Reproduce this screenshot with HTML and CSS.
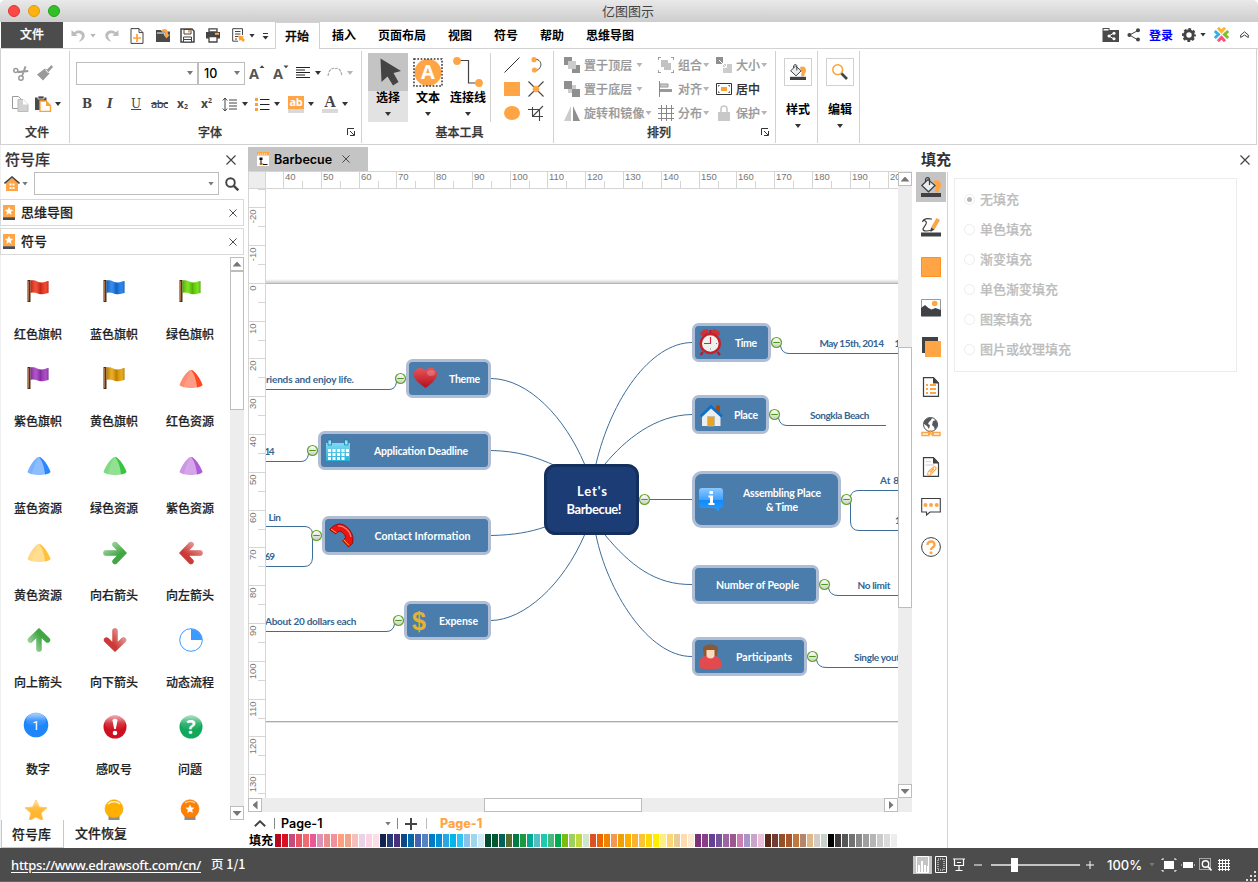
FILE: index.html
```html
<!DOCTYPE html>
<html lang="zh-CN">
<head>
<meta charset="utf-8">
<title>亿图图示</title>
<link rel="stylesheet" href="styles.css">
</head>
<body>
<svg class="defs" width="0" height="0">
  <defs>
    <linearGradient id="wave" x1="0" x2="1"><stop offset="0" stop-color="#000" stop-opacity=".25"/><stop offset=".3" stop-color="#fff" stop-opacity=".15"/><stop offset=".55" stop-color="#000" stop-opacity=".2"/><stop offset=".85" stop-color="#fff" stop-opacity=".1"/><stop offset="1" stop-color="#000" stop-opacity=".25"/></linearGradient>
    <linearGradient id="gloss" x1="0" y1="0" x2="0" y2="1"><stop offset="0" stop-color="#fff" stop-opacity=".65"/><stop offset=".55" stop-color="#fff" stop-opacity=".15"/><stop offset="1" stop-color="#fff" stop-opacity="0"/></linearGradient>
    <linearGradient id="glossx" x1="0" y1="0" x2=".7" y2="1"><stop offset=".1" stop-color="#fff" stop-opacity=".5"/><stop offset=".75" stop-color="#fff" stop-opacity="0"/></linearGradient>
    <linearGradient id="tg" x1="0" y1="0" x2="0" y2="1"><stop offset="0" stop-color="#fff"/><stop offset="1" stop-color="#c9cfc4"/></linearGradient>
    <linearGradient id="red" x1="0" y1="0" x2="0" y2="1"><stop offset="0" stop-color="#e8545b"/><stop offset="1" stop-color="#b3101b"/></linearGradient>
    <linearGradient id="cal" x1="0" y1="0" x2="0" y2="1"><stop offset="0" stop-color="#7ddcf2"/><stop offset="1" stop-color="#29b0da"/></linearGradient>
    <linearGradient id="info" x1="0" y1="0" x2="0" y2="1"><stop offset="0" stop-color="#8cc8ff"/><stop offset=".5" stop-color="#3fa2ff"/><stop offset=".52" stop-color="#1289fa"/><stop offset="1" stop-color="#2a9bff"/></linearGradient>
    <linearGradient id="gold" x1="0" y1="0" x2="0" y2="1"><stop offset="0" stop-color="#d9b24d"/><stop offset="1" stop-color="#f0b020"/></linearGradient>
    <symbol id="flag" viewBox="0 0 24 26"><path d="M1.5 2h3v22h-3z" fill="#4a2a15"/><path d="M2.6 3v20" stroke="#b07a50" stroke-width="1"/><path id="cloth" d="M4.500 2.600C9 .8 12 5 16 4.500c3-.3 4-1.500 6.500-1.500v12c-2.500 0-4 1.500-7 1.300C11 16 9 13.500 4.500 15z" fill="currentColor"/><path d="M4.500 2.600C9 .8 12 5 16 4.500c3-.3 4-1.500 6.500-1.500v12c-2.500 0-4 1.500-7 1.300C11 16 9 13.500 4.500 15z" fill="url(#wave)"/></symbol>
    <symbol id="cone" viewBox="0 0 24 20"><path d="M.5 16C3.500 8 9 1 12 1s8.500 7 11.500 15C22 18 17 19 12 19S2 18 .5 16z" fill="#fff"/><path d="M.5 16C3.500 8 9 1 12 1s8.500 7 11.500 15C22 18 17 19 12 19S2 18 .5 16z" fill="currentColor" opacity=".55"/><path d="M12 1c3 0 8.500 7 11.500 15-.8 1.300-3 2-5.500 2.500C17.500 12 15.500 5 12 1z" fill="currentColor"/><path d="M12 1C9 1 3.500 8 .5 16c.8 1 2.500 1.700 4.500 2.200C6 12 9 5 12 1z" fill="currentColor" opacity=".2"/></symbol>
    <symbol id="arr" viewBox="0 0 24 24"><path d="M3 12h16M12 3.500L20.300 12 12 20.500" fill="none" stroke="currentColor" stroke-width="5.400" stroke-linecap="round"/><path d="M3 12h16M12 3.500L20.300 12 12 20.500" fill="none" stroke="url(#glossx)" stroke-width="5.400" stroke-linecap="round"/></symbol>
    <symbol id="lib" viewBox="0 0 12 15"><path fill="#ffa545" d="M0 0h12v12H0z"/><path fill="#4c4c4c" d="M0 12.200h12V15H0z"/><path fill="#fff" d="M6 1.800l1.200 2.800 3 .3-2.300 2 .7 3L6 8.300 3.400 9.900l.7-3-2.300-2 3-.3z"/></symbol>
    <symbol id="x" viewBox="0 0 10 10"><path d="M.5.5l9 9M9.500.5l-9 9" stroke="#444" stroke-width="1.200" fill="none"/></symbol>
    <symbol id="launch" viewBox="0 0 8 8"><path d="M.5 7V.5H7M3 3l4 4M7.500 3v4.500H3" fill="none" stroke="#333"/></symbol>
    <symbol id="bucket" viewBox="0 0 20 20"><path d="M12 4c5-2 8 0 8 4 0 3-2 4-2 6 0 2-4 2-4 0 1-4 0-7-2-10z" fill="#ffa545"/><path d="M.8 8.500L7 2.500l7 6-6.500 6.300z" fill="#e9edf0" stroke="#3c3f42" stroke-width="1.200"/><path d="M4.500 5V2.500C5 0 9 0 8.500 3v5" fill="none" stroke="#3c3f42" stroke-width="1.200"/><path fill="#3f4144" d="M0 16h20v4H0z"/></symbol>
    <symbol id="minus" viewBox="0 0 12 12"><circle cx="6" cy="6" r="5" fill="url(#tg)" stroke="#63a527" stroke-width="1.200"/><path d="M2.800 6h6.400" stroke="#4b9a15" stroke-width="1.200"/></symbol>
  </defs>
</svg>
<header class="titlebar"><span class="light r"></span><span class="light y"></span><span class="light g"></span><h1>亿图图示</h1></header>

<nav class="menubar">
  <a class="filetab">文件</a>
  <div class="qat">
    <svg width="16" height="14" viewBox="0 0 16 14"><path d="M.5 1v6h6L4.700 5c3-2 7 0 6 3-.3 2-2 3-3 5 4-2 6-3 6-6.500C13.500 1.500 7 0 3 3.300z" fill="#bdbdbd"/></svg>
    <i class="caret pale"></i>
    <svg width="16" height="14" viewBox="0 0 16 14"><path d="M14.500 1v6h-6l1.800-2c-3-2-7 0-6 3 .3 2 2 3 3 5-4-2-6-3-6-6.500C1.500 1.500 8 0 12 3.300z" fill="#bdbdbd"/></svg>
    <svg width="14" height="16" viewBox="0 0 14 16"><path d="M1 .6h8l4 4v10.800H1zM9 .6v4h4" fill="#fff" stroke="#444"/><path d="M7 6v8M3 10h8" stroke="#ffa030" stroke-width="1.700"/></svg>
    <svg width="16" height="15" viewBox="0 0 16 15"><path d="M1 2h5l1 1.500h8V14H1z" fill="#4a4a4a"/><path d="M2 5h8v3" stroke="#fff" fill="none"/><path d="M7 1.500c4-1.500 6 0 6 5h2l-3.500 4L8.500 6.500h2C10.500 3 9 3 7 3z" fill="#ffa545"/></svg>
    <svg width="15" height="15" viewBox="0 0 15 15"><path d="M1 1h11l2 2v11H1z" fill="#fff" stroke="#444" stroke-width="1.500"/><path d="M4 1.500h7V6H4z" fill="#fff" stroke="#444"/><path d="M8 2h2v2.500H8z" fill="#ffa545"/><path d="M3.500 9h8v5h-8z" fill="#fff" stroke="#444"/><path d="M4 11.500h7" stroke="#444"/></svg>
    <svg width="16" height="15" viewBox="0 0 16 15"><path d="M4 .8h8V4H4z" fill="#fff" stroke="#444" stroke-width="1.300"/><path d="M1 4h14v6.500H1z" fill="#444"/><path d="M4 8.500h8V14H4z" fill="#fff" stroke="#444" stroke-width="1.300"/><path d="M10 4.800h4v2h-4z" fill="#ffa545"/></svg>
    <svg width="14" height="15" viewBox="0 0 14 15"><path d="M10.500 7V.7H.7v12.500H6M3 3.500h5.500M3 6h5.500M3 8.500h3M3 11h2" fill="none" stroke="#444"/><path d="M6 7.500l6 1-1.200 1.300L13 12l-2 2-2-2.200L7.500 13z" fill="#ffa030"/></svg>
    <i class="caret"></i>
    <svg width="7" height="8" viewBox="0 0 7 8"><path d="M1 1.500h5" stroke="#333"/><path d="M.5 4h6L3.500 7.500z" fill="#333"/></svg>
  </div>
  <div class="tabs"><a class="on">开始</a><a>插入</a><a>页面布局</a><a>视图</a><a>符号</a><a>帮助</a><a>思维导图</a></div>
  <div class="account">
    <svg width="17" height="14" viewBox="0 0 17 14"><path d="M.5 0h7v2H17v12H.5z" fill="#4a4a4a"/><path d="M1.500 1h5v1.500h-5z" fill="#fff"/><path d="M12 5L7 8l5 3" stroke="#fff" fill="none"/><circle cx="12" cy="5.200" r="1.500" fill="#fff"/><circle cx="12" cy="10.700" r="1.500" fill="#fff"/><circle cx="7" cy="8" r="1.500" fill="#fff"/></svg>
    <svg width="14" height="14" viewBox="0 0 14 14"><path d="M11 2.500L2.500 7l8.500 5" stroke="#444" fill="none"/><circle cx="11" cy="2.200" r="2" fill="#444"/><circle cx="2.400" cy="7" r="2" fill="#444"/><circle cx="11" cy="11.600" r="2" fill="#444"/></svg>
    <a class="login">登录</a>
    <svg width="14" height="14" viewBox="0 0 14 14"><circle cx="7" cy="7" r="4.200" fill="none" stroke="#444" stroke-width="3"/><circle cx="7" cy="7" r="6" fill="none" stroke="#444" stroke-width="2" stroke-dasharray="2.700 2.010" stroke-dashoffset="1.300"/></svg>
    <i class="caret"></i>
    <svg width="15" height="15" viewBox="0 0 15 15" fill="none" stroke-width="3"><path d="M4 .8l3.500 3.700L11 .8" stroke="#ffb42b"/><path d="M4 14.200l3.500-3.700 3.500 3.700" stroke="#ff4f7b"/><path d="M.8 4l3.700 3.500L.8 11" stroke="#35b0e6"/><path d="M14.200 4l-3.700 3.500 3.700 3.500" stroke="#7cc030"/></svg>
    <svg width="9" height="8" viewBox="0 0 9 8"><path d="M.7 4L4.500.8 8.300 4v2.500L4.500 4 .7 6.500z" fill="none" stroke="#444"/></svg>
  </div>
</nav>

<section class="ribbon">
  <div class="group g-file">
    <div class="row r-file">
      <svg width="16" height="15" viewBox="0 0 16 15"><g fill="none" stroke="#9a9a9a" stroke-width="1.500"><circle cx="2.800" cy="4.500" r="2"/><circle cx="8" cy="12" r="2.200"/></g><path d="M4.500 5L15 4l.5 2L5 7.300zM8 10.500L11.500.3l2 .2L9.800 10.500z" fill="#9a9a9a"/></svg>
      <svg width="16" height="16" viewBox="0 0 16 16"><path d="M14.500 0L16 2 11.500 7l1 1.500L6 15.500l-6-6L8 3.500l2 1z" fill="#9a9a9a"/><path d="M8.500 4.500l3 3.500" stroke="#fff"/></svg>
    </div>
    <div class="row r-file b">
      <svg width="17" height="16" viewBox="0 0 17 16"><path d="M.5.500h6l3 3v9h-9z" fill="#fff" stroke="#9a9a9a"/><path d="M6 3.500h5l5 5V15.500H6z" fill="#d2d2d2" stroke="#bbb"/><path d="M11 3.500v5h5" fill="#fff"/></svg>
      <svg width="17" height="16" viewBox="0 0 17 16"><path d="M0 1.500h11.500V6H5v8H0z" fill="#4a4a4a"/><path d="M3 0h6v3H3z" fill="#4a4a4a" stroke="#fff" stroke-width=".7"/><path d="M5 5h6l4.500 4.500v6H5z" fill="#fff" stroke="#ffa030" stroke-width="1.300"/><path d="M11 4.500L16 10h-5z" fill="#ffa030"/></svg>
      <i class="caret"></i>
    </div>
    <div class="label"><span>文件</span></div>
  </div>
  <div class="group g-font">
    <div class="row r-font1">
      <div class="combo"><i class="caret mid"></i></div>
      <div class="combo size"><span>10</span><i class="caret mid"></i></div>
      <svg width="17" height="22" viewBox="0 0 17 22"><path d="M10.500 6L13 3.300 15.500 6z" fill="#444"/><text x="0" y="17" class="icoA">A</text></svg>
      <svg width="17" height="22" viewBox="0 0 17 22"><path d="M10.500 3.500L13 6.200 15.500 3.500z" fill="#444"/><text x="0" y="17" class="icoA">A</text></svg>
      <svg width="14" height="12" viewBox="0 0 14 12"><path d="M0 .5h14M0 3h9M0 5.500h14M0 8h9M0 10.500h14" stroke="#222" stroke-width="1.100"/></svg>
      <i class="caret"></i>
      <svg width="16" height="12" viewBox="0 0 16 12"><path d="M1 9C2 2 6 0 8 2c2-2 6 0 7 7" fill="none" stroke="#aaa" stroke-width="1.200" stroke-dasharray="3 1"/></svg>
      <i class="caret pale"></i>
    </div>
    <div class="row r-font2">
      <b class="gl serif">B</b><b class="gl serif it">I</b><span class="gl serif un">U</span><span class="gl ab">abc</span><b class="gl">x<sub>2</sub></b><b class="gl">x<sup>2</sup></b>
      <svg width="16" height="15" viewBox="0 0 16 15"><path d="M3 1v13M.8 3.500L3 1l2.200 2.500M.8 11.500L3 14l2.200-2.500M7 3h8M7 6h8M7 9h8M7 12h8" stroke="#444" fill="none"/></svg>
      <i class="caret"></i>
      <svg width="15" height="13" viewBox="0 0 15 13"><path d="M0 0h3v3H0zM0 5h3v3H0zM0 10h3v3H0z" fill="#ffa030"/><path d="M5 1.500h9.500M5 6.500h9.500M5 11.500h9.500" stroke="#222" stroke-width="1.100"/></svg>
      <i class="caret"></i>
      <span class="hl"><em>ab</em></span>
      <i class="caret"></i>
      <span class="fc"><b>A</b></span>
      <i class="caret"></i>
    </div>
    <div class="label"><span>字体</span><svg width="8" height="8"><use href="#launch"/></svg></div>
  </div>
  <div class="group g-tools">
    <div class="tools">
      <button class="big on"><svg width="40" height="38" viewBox="0 0 40 38"><path d="M12.500 5.500L33 18l-7.500 2 5 9-5.500 3.500-5.500-9-6 5.500z" fill="#444"/></svg><span>选择</span><i class="caret"></i></button>
      <button class="big"><svg width="40" height="38" viewBox="0 0 40 38"><circle cx="20" cy="19.500" r="13.500" fill="#ffa545"/><path d="M6 6h28v27H6z" fill="none" stroke="#333" stroke-width="1.500" stroke-dasharray="1.700 1.600"/><text x="20" y="26" class="bigA">A</text></svg><span>文本</span><i class="caret"></i></button>
      <button class="big"><svg width="40" height="38" viewBox="0 0 40 38"><path d="M9 7.500h11.500v22.500H31" fill="none" stroke="#444" stroke-width="1.200"/><circle cx="9" cy="8" r="3.900" fill="#ffa545"/><circle cx="31" cy="30" r="3.900" fill="#ffa545"/></svg><span>连接线</span><i class="caret"></i></button>
      <div class="shapes">
        <svg width="16" height="16"><path d="M.5 15.500L15.500.500" stroke="#333"/></svg>
        <svg width="16" height="16" viewBox="0 0 16 16"><path d="M6 2c9 0 9 10 1 12" fill="none" stroke="#444"/><circle cx="6" cy="2.700" r="2.600" fill="#ffa545"/><circle cx="6.500" cy="13" r="2.600" fill="#ffa545"/></svg>
        <svg width="16" height="16"><path d="M0 1h16v14H0z" fill="#ffa545"/></svg>
        <svg width="16" height="16" viewBox="0 0 16 16"><path d="M.5.500l15 15M15.500.500l-15 15" stroke="#444" stroke-width="1.100"/><circle cx="8" cy="8" r="3.300" fill="#ffa545"/></svg>
        <svg width="16" height="16"><ellipse cx="8" cy="8" rx="8" ry="7" fill="#ffa545"/></svg>
        <svg width="16" height="16" viewBox="0 0 16 16"><path d="M0 4.500h11.500V16M4.500 2v9.500H15M4.500 11.500L15 1" stroke="#444" fill="none" stroke-width="1.100"/></svg>
      </div>
    </div>
    <div class="label"><span>基本工具</span></div>
  </div>
  <div class="group g-arr">
    <div class="arr">
      <span class="cmd"><svg width="16" height="16"><path d="M0 0h8v8H0zM8 8h8v8H8z" fill="#8f8f8f"/><path d="M4 4h8v8H4z" fill="#ccc"/></svg>置于顶层<i class="caret pale"></i></span>
      <span class="cmd"><svg width="16" height="16"><path d="M3 3h7v7H3zM6 6h7v7H6z" fill="#c2c2c2"/><path d="M0 3V0h3M13 0h3v3M16 13v3h-3M3 16H0v-3" fill="none" stroke="#888" stroke-width="1.500"/></svg>组合<i class="caret pale"></i></span>
      <span class="cmd"><svg width="16" height="16"><path d="M0 0h7v7H0z" fill="#8f8f8f"/><path d="M7 7h9v9H7z" fill="#ccc"/><path d="M3 3l7 7M7 10.500h3.500V7" stroke="#fff" fill="none"/></svg>大小<i class="caret pale"></i></span>
      <span class="cmd"><svg width="16" height="16"><path d="M4 4h8v8H4z" fill="#ccc"/><path d="M0 0h8v8H0zM8 8h8v8H8z" fill="#8f8f8f"/></svg>置于底层<i class="caret pale"></i></span>
      <span class="cmd"><svg width="16" height="16"><path d="M1.500 0v16" stroke="#888"/><path d="M2 3h8v3H2z" fill="#ccc" stroke="#999"/><path d="M2 8h12v3H2z" fill="#999"/></svg>对齐<i class="caret pale"></i></span>
      <span class="cmd dark"><svg width="16" height="12"><path d="M.5.500h15v11H.5z" fill="#fff" stroke="#333"/><path d="M5 4h6v4H5z" fill="#ffa030"/><path d="M2.500 3.500v-1h1M12.500 2.500h1v1M13.500 8.500v1h-1M3.500 9.500h-1v-1" stroke="#444" fill="none"/></svg>居中</span>
      <span class="cmd"><svg width="16" height="15"><path d="M7 0v15H0z" fill="#ccc"/><path d="M9 0v15h7z" fill="#8f8f8f"/></svg>旋转和镜像<i class="caret pale"></i></span>
      <span class="cmd"><svg width="16" height="16"><path d="M3.500 0v16M8.500 0v16M13.500 0v16M0 3.500h16M0 8.500h16M0 13.500h16" stroke="#888"/></svg>分布<i class="caret pale"></i></span>
      <span class="cmd"><svg width="14" height="16"><path d="M1 7h12v9H1z" fill="#c8c8c8"/><path d="M4 8V4c0-4 6-4 6 0v4" fill="none" stroke="#c8c8c8" stroke-width="1.600"/></svg>保护<i class="caret pale"></i></span>
    </div>
    <div class="label"><span>排列</span><svg width="8" height="8"><use href="#launch"/></svg></div>
  </div>
  <div class="group g-drop"><div class="box"><svg width="16" height="16"><use href="#bucket"/></svg></div><span>样式</span><i class="caret"></i></div>
  <div class="group g-drop"><div class="box"><svg width="16" height="16" viewBox="0 0 16 16"><circle cx="5.700" cy="5.700" r="4.900" fill="none" stroke="#ffa030" stroke-width="1.500"/><path d="M9.500 9.500l5.500 5.500" stroke="#444" stroke-width="2.600"/></svg></div><span>编辑</span><i class="caret"></i></div>
</section>

<main class="work">
  <aside class="left">
    <div class="phead"><h2>符号库</h2><svg width="10" height="10"><use href="#x"/></svg></div>
    <div class="search">
      <svg width="16" height="15" viewBox="0 0 16 15"><path d="M2 7l6-5 6 5v8H2z" fill="#ffa545"/><path d="M.5 7.500L8 1l7.500 6.500" fill="none" stroke="#444" stroke-width="1.600"/><path d="M5.500 7.500h2v2h-2zM8.500 7.500h2v2h-2zM5.500 11h2v2h-2zM8.500 11h2v2h-2z" fill="#fff"/></svg>
      <i class="caret mid"></i>
      <div class="field"><i class="caret mid"></i></div>
      <svg width="14" height="14" viewBox="0 0 14 14"><circle cx="5.500" cy="5.500" r="4.300" fill="none" stroke="#444" stroke-width="1.900"/><path d="M8.800 8.800l4.500 4.500" stroke="#444" stroke-width="2.400"/></svg>
    </div>
    <div class="libbar"><svg width="12" height="15"><use href="#lib"/></svg><span>思维导图</span><svg width="8" height="8"><use href="#x"/></svg></div>
    <div class="libbar"><svg width="12" height="15"><use href="#lib"/></svg><span>符号</span><svg width="8" height="8"><use href="#x"/></svg></div>
    <div class="libbody">
      <div class="symbols">
        <figure><svg class="c-red flag"><use href="#flag"/></svg><figcaption>红色旗帜</figcaption></figure>
        <figure><svg class="c-blue flag"><use href="#flag"/></svg><figcaption>蓝色旗帜</figcaption></figure>
        <figure><svg class="c-green flag"><use href="#flag"/></svg><figcaption>绿色旗帜</figcaption></figure>
        <figure><svg class="c-purple flag"><use href="#flag"/></svg><figcaption>紫色旗帜</figcaption></figure>
        <figure><svg class="c-gold flag"><use href="#flag"/></svg><figcaption>黄色旗帜</figcaption></figure>
        <figure><svg class="k-red cone"><use href="#cone"/></svg><figcaption>红色资源</figcaption></figure>
        <figure><svg class="k-blue cone"><use href="#cone"/></svg><figcaption>蓝色资源</figcaption></figure>
        <figure><svg class="k-green cone"><use href="#cone"/></svg><figcaption>绿色资源</figcaption></figure>
        <figure><svg class="k-purple cone"><use href="#cone"/></svg><figcaption>紫色资源</figcaption></figure>
        <figure><svg class="k-gold cone"><use href="#cone"/></svg><figcaption>黄色资源</figcaption></figure>
        <figure><svg class="a-green arw"><use href="#arr"/></svg><figcaption>向右箭头</figcaption></figure>
        <figure><svg class="a-red arw to-left"><use href="#arr"/></svg><figcaption>向左箭头</figcaption></figure>
        <figure><svg class="a-green arw to-top"><use href="#arr"/></svg><figcaption>向上箭头</figcaption></figure>
        <figure><svg class="a-red arw to-bottom"><use href="#arr"/></svg><figcaption>向下箭头</figcaption></figure>
        <figure><svg class="disc" width="24" height="24"><circle cx="12" cy="12" r="11.300" fill="#fff" stroke="#3d9bff"/><path d="M12 12V1a11 11 0 0 1 11 11z" fill="#3d9bff"/></svg><figcaption>动态流程</figcaption></figure>
        <figure><svg class="num" width="26" height="26"><circle cx="13" cy="13" r="12.300" fill="#1e86fb"/><ellipse cx="13" cy="8" rx="10" ry="7" fill="url(#gloss)"/><text x="13" y="17.500" class="n1">1</text></svg><figcaption>数字</figcaption></figure>
        <figure><svg class="disc" width="24" height="24"><circle cx="12" cy="12" r="11.500" fill="#cf1020"/><ellipse cx="12" cy="8" rx="10.500" ry="7.500" fill="url(#gloss)"/><path d="M9.500 5.500c0-2.500 5-2.500 5 0L12.800 14h-1.600z" fill="#fff"/><circle cx="12" cy="18" r="2.300" fill="#fff"/></svg><figcaption>感叹号</figcaption></figure>
        <figure><svg class="disc" width="24" height="24"><circle cx="12" cy="12" r="11.500" fill="#12a85c"/><ellipse cx="12" cy="8" rx="10.500" ry="7.500" fill="url(#gloss)"/><text x="12" y="19" class="q">?</text></svg><figcaption>问题</figcaption></figure>
        <figure class="last"><svg class="star" width="24" height="24"><path d="M12 1l3.300 7 7.700.8-5.800 5.200 1.800 8L12 18l-7 4 1.800-8L1 8.800 8.700 8z" fill="#ffb52e" stroke="#ffc860"/><path d="M12 1l3.300 7 7.700.8-5.800 5.200H7L1 8.800 8.700 8z" fill="url(#gloss)"/></svg></figure>
        <figure class="last"><svg width="20" height="24"><path d="M4.500 17h11v4h-11z" fill="#8d8d8d"/><circle cx="10" cy="9.800" r="9" fill="#ffb000" stroke="#f0a000" stroke-width=".6"/><path d="M4 5c3-3 9-3 12 0" fill="none" stroke="#fff0c0" stroke-width="1.500"/></svg></figure>
        <figure class="last"><svg width="20" height="24"><path d="M4.500 17h11v4h-11z" fill="#8d8d8d"/><circle cx="10" cy="9.800" r="9" fill="#ff7f00" stroke="#ec7300" stroke-width=".6"/><path d="M5 4c3-2 7-2 10 0" fill="none" stroke="#ffd0a0" stroke-width="1.200"/><path d="M10 5.500l1.400 2.900 3.100.3-2.300 2.100.6 3.200-2.800-1.600L7.200 14l.6-3.200-2.300-2.100 3.100-.3z" fill="#fff"/></svg></figure>
      </div>
      <div class="vscroll lib"><span class="sb"></span><span class="thumb"></span><span class="sb down"></span></div>
    </div>
    <div class="ltabs"><a class="on">符号库</a><a>文件恢复</a></div>
  </aside>

  <section class="center">
    <div class="docbar"><div class="doc"><svg width="12" height="14" viewBox="0 0 12 14"><path fill="#fff" d="M0 0h12v14H0z"/><path fill="#ffa545" d="M0 0h12v3.500H0zM2.500 11h4v2h-4z"/><path d="M1 2h10" stroke="#fff" stroke-dasharray="1 1"/><path d="M2.500 5.500h3v2.500h-3z" fill="#111"/><path d="M4 8v4.500M6 12.500h4.500" stroke="#111" fill="none"/></svg><b>Barbecue</b><svg width="8" height="8"><use href="#x"/></svg></div></div>
    <div class="sheet">
      <div class="corner"></div>
      <svg class="hruler" width="632" height="18"></svg>
      <svg class="vruler" width="18" height="609"></svg>
      <svg class="canvas" width="632" height="609" viewBox="266 189 632 609">
        <defs>
          <linearGradient id="sht" x1="0" y1="0" x2="0" y2="1"><stop offset="0" stop-color="#fff"/><stop offset="1" stop-color="#cfcfcf"/></linearGradient>
        </defs>
        <path d="M266 279h632v4H266z" fill="url(#sht)"/><path d="M266 283.500h632" stroke="#b5b5b5"/>
        <path d="M266 721.500h632" stroke="#ababab"/><path d="M266 722.500h632" stroke="#e3e3e3"/>
        <g class="link">
          <path d="M491 378.500C529 379 565 418 584.500 464M491 450.500C518 451 536 457 556 466M491 535.500C515 535 530 532 545 527M491 620.500C524 620 563 585 584.500 535M692 342.500C650 343 611 400 596 464M692 414.500C655 415 625 440 605 464M650 499.500H692M605 535C630 565 655 585 692 584.500M596 535C607 590 648 657 692 656.500"/>
          <path d="M266 389.500H389Q395.500 389.500 396.500 382M266 461.500H301Q307.500 461.500 308.500 454M266 526.500H305Q311.500 527 312.500 533M312.500 537V558Q312 566.500 304 566.500H266M266 631.500H387Q393.500 631 394.500 624"/>
          <path d="M780.500 346Q782 353.500 789 353.500H898M778.500 418Q780 425.500 787 425.500H886M850.500 496Q852 490.500 859 490.500H898M850.500 501V522Q851 530.500 859 530.500H898M828.500 588Q830 595.500 838 595.500H898M816.500 660Q818 667.500 826 667.500H898"/>
        </g>
        <g class="node">
          <rect x="407.500" y="360.500" width="82" height="36" rx="5"/><rect x="319.500" y="432.500" width="170" height="36" rx="5"/><rect x="323.500" y="517.500" width="166" height="36" rx="5"/><rect x="405.500" y="602.500" width="84" height="36" rx="5"/>
          <rect x="693.500" y="324.500" width="76" height="36" rx="5"/><rect x="693.500" y="396.500" width="74" height="36" rx="5"/><rect x="693.500" y="472.500" width="146" height="54" rx="8"/><rect x="693.500" y="566.500" width="124" height="36" rx="5"/><rect x="693.500" y="638.500" width="112" height="36" rx="5"/>
        </g>
        <rect class="hub" x="545.500" y="465.500" width="92" height="68" rx="10"/>
        <g>
          <use href="#minus" x="394.500" y="372.500" width="12" height="12"/><use href="#minus" x="306.500" y="444.500" width="12" height="12"/><use href="#minus" x="310.500" y="529.500" width="12" height="12"/><use href="#minus" x="392.500" y="614.500" width="12" height="12"/><use href="#minus" x="638.500" y="493.500" width="12" height="12"/><use href="#minus" x="770.500" y="336.500" width="12" height="12"/><use href="#minus" x="768.500" y="408.500" width="12" height="12"/><use href="#minus" x="840.500" y="493.500" width="12" height="12"/><use href="#minus" x="818.500" y="578.500" width="12" height="12"/><use href="#minus" x="806.500" y="650.500" width="12" height="12"/>
        </g>
        <g class="ntext">
          <text x="449" y="383" textLength="31">Theme</text><text x="374" y="455" textLength="94">Application Deadline</text><text x="374.500" y="540" textLength="96">Contact Information</text><text x="439" y="625" textLength="39">Expense</text>
          <text x="735" y="347" textLength="22">Time</text><text x="734" y="419" textLength="24">Place</text><text x="743" y="497" textLength="78">Assembling Place</text><text x="766" y="511" textLength="32">&amp; Time</text><text x="716" y="589" textLength="83">Number of People</text><text x="736" y="661" textLength="56">Participants</text>
        </g>
        <g class="htext"><text x="577" y="496" textLength="30">Let's</text><text x="566.500" y="513.500" textLength="55">Barbecue!</text></g>
        <g class="stext">
          <text x="266" y="383" textLength="88">riends and enjoy life.</text><text x="264.500" y="455" textLength="10">14</text><text x="268.500" y="521" textLength="12.500">Lin</text><text x="264.500" y="560" textLength="10.500">69</text><text x="265" y="625" textLength="91.500">About 20 dollars each</text>
          <text x="819.500" y="347" textLength="64.500">May 15th, 2014</text><text x="894.500" y="347">1</text><text x="810" y="419" textLength="59.500">Songkla Beach</text><text x="880" y="484" textLength="19">At 8</text><text x="895" y="524">1</text><text x="857.500" y="589" textLength="33">No limit</text><text x="854" y="661" textLength="46">Single yout</text>
        </g>
        <!-- heart -->
        <path d="M425.500 388c-4-3-12-8-11.700-13.500.3-7 8.500-8.500 11.700-3.500 3-5.500 11.500-3.500 11.500 3 0 6-7.500 11-11.500 14z" fill="url(#red)"/><ellipse cx="431" cy="373" rx="4" ry="3" fill="#fff" opacity=".2"/>
        <!-- calendar -->
        <g><path d="M326 443h24v18h-24z" fill="url(#cal)"/><path d="M328 440h3.500v5H328zM344.500 440h3.500v5h-3.500z" fill="#8fe6fa" stroke="#1c7ea8" stroke-width=".8"/><path d="M328 449h3v3h-3zM332.500 449h3v3h-3zM337 449h3v3h-3zM341.500 449h3v3h-3zM346 449h3v3h-3zM328 453h3v3h-3zM332.500 453h3v3h-3zM337 453h3v3h-3zM341.500 453h3v3h-3zM346 453h3v3h-3zM328 457h3v3h-3zM332.500 457h3v3h-3zM337 457h3v3h-3zM341.500 457h3v3h-3z" fill="#fff"/></g>
        <!-- handset -->
        <path d="M330 529c2-2 5-4.500 9-5 7-.5 14 8 14 15l-.5 4.500-4 3.500-6-6.500 3-3c0-3-3.500-6-6.500-6.500l-3 3-6-4z" fill="#ed1410" stroke="#8f0000" stroke-width=".8"/><path d="M331 529l5.500 4M343.500 539.500l5.500 6" stroke="#f2b632" stroke-width="1"/><path d="M338 526c6-.5 12 5 13 11" stroke="#ff7d6e" stroke-width="1.200" fill="none"/>
        <text x="419" y="630" class="dollar">$</text>
        <!-- alarm clock -->
        <g><path d="M703 352l-2.500 3M717.500 352l2.500 3M710.500 330v4" stroke="#b51d24" stroke-width="2.200"/><ellipse cx="704.500" cy="332.500" rx="4.500" ry="2.600" transform="rotate(-28 704.500 332.500)" fill="#cf3138"/><ellipse cx="716" cy="332.500" rx="4.500" ry="2.600" transform="rotate(28 716 332.500)" fill="#cf3138"/><circle cx="710.300" cy="343.500" r="9.500" fill="#eef2ef" stroke="#c81f29" stroke-width="2.400"/><path d="M710.500 337v6.500H704" stroke="#d24" stroke-width="1.200" fill="none"/><path d="M710.500 349.500v-1M717 343.500h-1" stroke="#777"/></g>
        <!-- house -->
        <g><path d="M716 405.500h4v9h-4z" fill="#a34a10"/><path d="M702 415l9-8.500 9.500 8.500v11H702z" fill="#eee"/><path d="M707.500 416.500h7v9.500h-7z" fill="#e9a51d" stroke="#b9b9b9" stroke-width=".8"/><path d="M699.500 415.500L711 404.500l12 11-2 2-10-9-9.500 9z" fill="#0f70cc"/></g>
        <!-- speech bubble -->
        <g><path d="M702 488h18q3 0 3 3v14q0 3-3 3h-1v3l-5-3h-12q-3 0-3-3v-14q0-3 3-3z" fill="url(#info)"/><path d="M709.500 491h3.500v3h-3.500zM708.500 495.500h4.500v7.500h1.500v2h-6v-2h1.500v-5.500h-1.500z" fill="#fff"/></g>
        <!-- person -->
        <g><path d="M699.500 668c-1.500-6 1-12 6-12h9c5 0 8 6 6.500 12-4 1.500-17.500 1.500-21.500 0z" fill="#e24a4d"/><path d="M704 656l-1-7c0-6 15-6 15 0l-1 7z" fill="#8b5a32"/><path d="M706.500 650h8v5.500c0 4-8 4-8 0z" fill="#fbd9bd"/></g>
      </svg>
      <div class="vscroll main"><span class="sb"></span><span class="thumb"></span><span class="sb down"></span></div>
      <div class="hscroll"><span class="sb lft"></span><span class="thumb"></span><span class="sb rgt"></span></div>
      <div class="dead"></div>
    </div>
    <div class="pages">
      <svg width="12" height="7" viewBox="0 0 12 7"><path d="M.8 6.200L6 1.200l5.200 5" fill="none" stroke="#444" stroke-width="1.900"/></svg>
      <i class="bar"></i><b>Page-1</b><i class="caret mid"></i><i class="bar"></i>
      <svg width="12" height="12"><path d="M6 0v12M0 6h12" stroke="#444" stroke-width="2"/></svg>
      <i class="bar soft"></i><b class="cur">Page-1</b>
    </div>
    <div class="fillbar"><span>填充</span><div class="palette"></div></div>
  </section>

  <aside class="right">
    <div class="phead"><h2>填充</h2><svg width="10" height="10"><use href="#x"/></svg></div>
    <div class="rbody">
      <div class="rail">
        <span class="on"><svg width="20" height="20"><use href="#bucket"/></svg></span>
        <span><svg width="20" height="20"><path d="M1.500 5C3 0 8 2 11 2M2 3c3 1 4 2 3 4l-3 5c0 3 5 2 9 1" fill="none" stroke="#3c3f42" stroke-width="1.200"/><path d="M15.500 1l3.500 2-5.500 9.500-3.500-2z" fill="#ffa545"/><path d="M10 10.500l3.500 2L9.500 15z" fill="#3f4144"/><path fill="#3f4144" d="M0 15.500h20v4H0z"/></svg></span>
        <span><svg width="20" height="20"><path d="M.5.500h19v19H.5z" fill="#ffa545" stroke="#ff9120"/></svg></span>
        <span><svg width="20" height="20"><path d="M.5 2.500h19v17H.5z" fill="#fff" stroke="#999"/><path d="M0 11l4-3 3.500 3 3 1.500 4-1.500 5.500 2v6H0z" fill="#3f4144"/><circle cx="13.700" cy="6.500" r="2.800" fill="#ffa545"/></svg></span>
        <span><svg width="20" height="20"><path d="M1 0h16v16H1z" fill="#3f4144"/><path d="M4 4h16v16H4z" fill="#ffa545"/></svg></span>
        <span><svg width="20" height="20"><path d="M3 .7h9.500L17.500 6v13.300H2.500V.7z" fill="#fff" stroke="#3c3f42" stroke-width="1.200"/><path d="M12 .5L18 6.500h-6z" fill="#3c3f42"/><path d="M5 8h2M9 8h6M5 12h2M9 12h6M5 16h2M9 16h6" stroke="#ffa545" stroke-width="1.800"/></svg></span>
        <span><svg width="20" height="20"><circle cx="9.500" cy="7.500" r="7" fill="#fff" stroke="#4c4c4c"/><path d="M3 4c2-3 6-4 8-3L10 3 8 5l-1 2 2 1-1 4-2-3-3-2zM12 4l3-1 2 5-3 5-1-3-2-2z" fill="#55585a"/><path d="M9.500 13v3M1 15.500h7v3H1zM11.500 15.500h7.500v3h-7.500zM7 17h6" fill="none" stroke="#ffa545" stroke-width="1.500"/></svg></span>
        <span><svg width="20" height="20"><path d="M3 .7h9.500L17.500 6v13.300H2.500V.7z" fill="#fff" stroke="#3c3f42" stroke-width="1.200"/><path d="M12 .5L18 6.500h-6z" fill="#3c3f42"/><path d="M4.500 4.500H10M4.500 8h9" stroke="#ddd" stroke-width="1.400"/><path d="M7 15l5.500-5c2-1 3.500 1 2 2.500L9 18c-2 1-3-1-2-2.500M9 15.500l4-4" fill="none" stroke="#ffa545" stroke-width="1.100"/></svg></span>
        <span><svg width="20" height="20"><path d="M1 1.500h18.300v13.500H9L5.500 18v-3H.7V1.500z" fill="#fff" stroke="#3c3f42" stroke-width="1.100"/><circle cx="4.500" cy="8" r="2" fill="#ffa545"/><circle cx="10" cy="8" r="2" fill="#ffa545"/><circle cx="15.700" cy="8" r="2" fill="#ffa545"/></svg></span>
        <span><svg width="20" height="20"><circle cx="10" cy="10" r="9.400" fill="#fff" stroke="#3c3f42"/><path d="M6.500 8c0-5 7.500-4.500 7 0-.3 2.500-3.500 2-3.500 5" fill="none" stroke="#ffa545" stroke-width="2.400"/><circle cx="10" cy="15.800" r="1.500" fill="#ffa545"/></svg></span>
      </div>
      <div class="opts">
        <label class="sel"><i></i>无填充</label><label><i></i>单色填充</label><label><i></i>渐变填充</label><label><i></i>单色渐变填充</label><label><i></i>图案填充</label><label><i></i>图片或纹理填充</label>
      </div>
    </div>
  </aside>
</main>

<footer class="status">
  <a>https://www.edrawsoft.com/cn/</a><span class="pg">页 1/1</span>
  <div class="view">
    <span class="vb on"><svg width="13" height="17"><path d="M.5.500h12v16H.5z" fill="none" stroke="#fff"/><path d="M2 16V9h2v7zM5 16V5h2v11zM8 16V9h2v7zM11 16v-6h1v6z" fill="#fff"/></svg></span>
    <svg width="12" height="17"><path d="M.5.500h11v16H.5z" fill="none" stroke="#fff"/><path d="M3 3h6v11H3z" fill="none" stroke="#fff" stroke-dasharray="1 1"/></svg>
    <svg width="12" height="14"><path d="M0 1h12M1.500 1v6.500h9V1M4 4.500h4M6 8v4M2.500 12.500h7" fill="none" stroke="#fff" stroke-width="1.200"/></svg>
    <svg width="8" height="8"><path d="M0 4h8" stroke="#fff"/></svg>
    <span class="slider"><i></i></span>
    <svg width="8" height="8"><path d="M0 4h8M4 0v8" stroke="#fff"/></svg>
    <span class="pct">100%</span>
    <i class="caret dim"></i>
    <svg width="16" height="14"><path d="M3 3h10v8H3z" fill="#fff"/><path d="M1 2V1h2M13 1h2v1M15 12v1h-2M3 13H1v-1" fill="none" stroke="#fff"/></svg>
    <svg width="14" height="8"><path d="M2 1h10v6H2zM0 3.500h1v1H0zM13 3.500h1v1h-1z" fill="#fff"/></svg>
    <svg width="13" height="14"><path d="M.5.500h11v11H.5z" fill="none" stroke="#fff" stroke-dasharray="1 1"/><circle cx="6.500" cy="6" r="3.200" fill="#4c4c4c" stroke="#fff" stroke-width="1.400"/><path d="M9 8.500l3.500 4" stroke="#fff" stroke-width="1.800"/></svg>
    <svg width="12" height="12"><path d="M1.500 0v12M4.500 0v12M7.500 0v12M10.500 0v12M0 1.500h12M0 4.500h12M0 7.500h12M0 10.500h12" stroke="#fff"/></svg>
    <svg class="grip" width="10" height="10"><path d="M8 0h2v2H8zM8 4h2v2H8zM8 8h2v2H8zM4 4h2v2H4zM4 8h2v2H4zM0 8h2v2H0z" fill="#ddd"/></svg>
  </div>
</footer>
<script src="app.js"></script>
</body>
</html>
```

FILE: styles.css
```css
* { box-sizing: border-box; }
body { margin: 0; width: 1258px; height: 882px; overflow: hidden; display: flex; flex-direction: column; background: #fff; font: 500 12px/1 "Noto Sans CJK SC", sans-serif; color: #222; }
svg { display: block; flex: none; }
.defs { position: absolute; }
h1, h2, figure { margin: 0; font-weight: 500; }
button { border: 0; padding: 0; background: none; font: inherit; color: inherit; }

.caret { display: block; flex: none; width: 6px; height: 4px; background: #333; clip-path: polygon(0 0, 100% 0, 50% 100%); }
.caret.pale { background: #b5b5b5; }
.caret.mid { background: #777; }
.caret.dim { background: #777; }

.titlebar { flex: none; height: 22px; display: grid; grid-template-columns: 20px 20px 20px 1fr; padding-left: 8px; align-items: center; background: linear-gradient(#e9e9e9, #cdcdcd); border-radius: 5px 5px 0 0; }
.light { width: 12px; height: 12px; border-radius: 50%; border: 1px solid; }
.light.r { background: #fc4948; border-color: #dd3534; }
.light.y { background: #fdb20f; border-color: #dd9a10; }
.light.g { background: #33c027; border-color: #20a31a; }
.titlebar h1 { font-size: 13px; font-weight: 400; color: #444; text-align: center; margin: -2px 70px 0 0; }

.menubar { flex: none; height: 27px; display: flex; border-bottom: 1px solid #d2d2d2; }
.filetab { width: 62px; height: 26px; margin-left: 1px; background: #4c4c4c; color: #fff; display: flex; align-items: center; justify-content: center; padding-bottom: 2px; -webkit-text-stroke: .25px; }
.qat { margin-left: 8px; display: grid; grid-template-columns: 19px 14px 26px 25px 25px 25px 27px 17px 13px 14px; align-items: center; width: 205px; }
.qat, .tabs, .account { height: 27px; }
.tabs { display: flex; font-size: 12px; font-weight: 700; color: #000; }
.tabs a { padding: 0 11px; height: 26px; display: flex; align-items: center; }
.tabs a.on { width: 45px; height: 27px; padding: 0 9px; margin: 0 1px 0 -1px; background: #fff; border: 1px solid #d2d2d2; border-bottom: 0; font-weight: 500; -webkit-text-stroke: .25px; }
.account { margin-left: auto; width: 156px; display: grid; grid-template-columns: 25px 22px 33px 18px 14px 26px 9px; align-items: center; padding-bottom: 2px; }
.login { color: #00f; font-weight: 700; }

.ribbon { flex: none; height: 96px; padding: 2px 0 1px; display: flex; border: 1px solid #d2d2d2; border-top: 0; width: 1257px; }
.group { border-right: 1px solid #d2d2d2; height: 92px; }
.g-file { width: 69px; }
.row { display: grid; align-items: center; height: 24px; }
.label { display: flex; align-items: center; color: #333; -webkit-text-stroke: .25px; }
.label span { flex: 1; text-align: center; padding-left: 3px; }
.label svg { margin-right: 6px; }
.g-file, .g-font { padding-top: 10px; }
.g-file .label, .g-font .label { height: 18px; margin-top: 7px; }
.g-file .label { padding-left: 1px; }
.r-file { grid-template-columns: 24px 20px 8px; padding-left: 12px; }
.r-file.b { margin-top: 7px; padding-left: 11px; grid-template-columns: 23px 20px 8px; }
.g-font { width: 292px; }
.r-font1 { grid-template-columns: 121px 52px 24px 23px 19px 12px 20px 8px; padding-left: 6px; }
.combo { height: 23px; border: 1px solid #bdbdbd; display: flex; align-items: center; justify-content: flex-end; padding-right: 4px; width: 122px; }
.combo.size { width: 47px; justify-content: space-between; padding-left: 5px; font: 500 12.500px Inter, sans-serif; color: #000; margin-left: 1px; }
.icoA { font: 700 14.500px "Open Sans", sans-serif; fill: #555; }
.bigA { font: 700 20px "Open Sans", sans-serif; fill: #fff; text-anchor: middle; }
.r-font2 { margin-top: 7px; grid-template-columns: 25px 24px 20px 26px 24px 21px 20px 13px 19px 14px 20px 14px 20px 8px; padding-left: 12px; color: #444; }
.gl { font-size: 12px; line-height: 16px; white-space: nowrap; font-family: "Noto Sans", sans-serif; }
.gl sub, .gl sup { font-size: 7px; line-height: 0; }
.gl sub { vertical-align: -1px; }
.gl sup { vertical-align: 5px; }
.serif { font-family: "DejaVu Serif", serif; font-size: 12px; }
.it { font-style: italic; }
.un { text-decoration: underline; font-weight: 400; font-size: 12px; }
.ab { font-size: 11px; text-decoration: line-through; letter-spacing: -.5px; }
.hl { width: 16px; height: 17px; border-bottom: 4px solid #d9d9d9; background: #ffa545; color: #fff; display: flex; justify-content: center; align-items: center; }
.hl em { font: 700 11px/10px "Open Sans", sans-serif; letter-spacing: -.3px; }
.fc { width: 16px; height: 17px; border-bottom: 4px solid #d9d9d9; text-align: center; }
.fc b { display: block; font: 700 16px/12px "Liberation Serif", serif; }

.g-tools { width: 192px; padding: 2px 0 0 6px; }
.tools { display: flex; height: 69px; }
.big { width: 40px; display: flex; flex-direction: column; align-items: center; font-weight: 700; color: #000; }
.big span { height: 12px; line-height: 12px; white-space: nowrap; }
.big .caret { margin-top: 9px; }
.big.on { background: linear-gradient(#c4c4c4 38px, #e2e2e2 38px); }
.shapes { border-left: 1px solid #d2d2d2; margin-left: 2px; padding: 4px 0 0 13px; display: grid; grid-template-columns: 24px 16px; grid-template-rows: 24px 24px 16px; align-items: start; }
.g-tools .label, .g-arr .label { height: 14px; margin-top: 3px; }
.g-tools .label { padding-right: 5px; }
.g-arr { width: 222px; padding-top: 2px; }
.arr { display: grid; grid-template: repeat(3, 24px) / 94px 58px 60px; padding-left: 10px; height: 69px; }
.cmd { display: flex; align-items: center; color: #999; font-size: 12px; letter-spacing: .1px; white-space: nowrap; -webkit-text-stroke: .2px; }
.cmd svg { margin-right: 4px; }
.cmd svg[width="14"] { margin: 0 5px 0 1px; }
.cmd .caret { margin-left: 4px; }
.cmd:nth-child(3n+2) .caret, .cmd:nth-child(3n) .caret, .cmd:nth-child(7) .caret { margin-left: 1px; }
.cmd.dark { color: #333; }
.g-drop { width: 42px; display: flex; flex-direction: column; align-items: center; padding: 7px 0 0 3px; font-weight: 700; color: #000; }
.box { width: 28px; height: 28px; border: 1px solid #d2d2d2; display: grid; place-items: center; }
.g-drop span { margin-top: 17px; }
.g-drop .caret { margin-top: 9px; }

.work { flex: 1; min-height: 0; display: flex; }
.left { width: 248px; display: flex; flex-direction: column; border-left: 1px solid #f0f0f0; -webkit-text-stroke: .2px; }
.phead { flex: none; display: flex; justify-content: space-between; align-items: center; height: 27px; padding: 3px 12px 0 4px; }
.phead h2 { font-size: 15px; color: #333; margin-top: -4px; }
.search { flex: none; height: 22px; display: grid; grid-template-columns: 18px 12px 191px 14px; align-items: center; padding-left: 3px; }
.field { width: 185px; height: 23px; border: 1px solid #bdbdbd; display: flex; align-items: center; justify-content: flex-end; padding-right: 4px; }
.libbar { flex: none; height: 27px; width: 244px; border: 1px solid #d9d9d9; margin: 5px 0 0 -1px; display: flex; align-items: center; padding: 0 6px 0 2px; font-size: 13px; }
.libbar + .libbar { margin-top: 2px; }
.libbar span { flex: 1; padding-left: 6px; margin-top: -3px; font-weight: 500; }
.libbody { height: 565px; flex: none; display: flex; overflow: hidden; }
.symbols { width: 230px; padding-right: 1px; display: grid; grid-template: repeat(7, 87px) / repeat(3, 76px); align-content: start; overflow: hidden; margin-left: -1px; }
figure { display: flex; flex-direction: column; align-items: center; height: 87px; padding-top: 9px; font-size: 12px; }
figure svg { margin: 14px 0; flex: none; }
figcaption { margin-top: auto; height: 12px; margin-bottom: 2px; white-space: nowrap; }
figure .flag { width: 24px; height: 26px; }
figure .cone { width: 24px; height: 20px; margin: 18px 0 0 1px; }
figure .arw { width: 24px; height: 24px; margin: 16px 0 0 1px; }
figure .disc { margin: 16px 0 0 1px; }
.to-left { transform: scaleX(-1); }
.to-top { transform: rotate(-90deg); }
.to-bottom { transform: rotate(90deg); }
figure .num { margin: 13px 5px 0 0; }
figure.last { padding-top: 8px; }
figure .star { margin-right: 4px; }
.c-red { color: #f33218; }
.c-blue { color: #1479ee; }
.c-green { color: #68de00; }
.c-purple { color: #a437c4; }
.c-gold { color: #eaa000; }
.k-red { color: #ff4a21; }
.k-blue { color: #2b86ff; }
.k-green { color: #36c63c; }
.k-purple { color: #b05cd6; }
.k-gold { color: #ffc23b; }
.a-green { color: #41a744; }
.a-red { color: #cb3a36; }
.n1 { font: 400 13px Roboto, sans-serif; fill: #fff; text-anchor: middle; }
.q { font: 700 19px "Noto Sans", sans-serif; fill: #fff; text-anchor: middle; }
.vscroll { display: flex; flex-direction: column; width: 14px; background: #ededed; }
.vscroll.lib { margin-top: 2px; }
.sb { width: 14px; height: 14px; border: 1px solid #bdbdbd; background: #fff; display: grid; place-items: center; flex: none; }
.sb::after { content: ""; width: 9px; height: 5px; background: #777; clip-path: polygon(0 100%, 50% 0, 100% 100%); }
.sb.down::after { transform: scaleY(-1); }
.sb.lft::after { width: 5px; height: 9px; clip-path: polygon(100% 0, 0 50%, 100% 100%); }
.sb.rgt::after { width: 5px; height: 9px; clip-path: polygon(0 0, 100% 50%, 0 100%); }
.thumb { background: #fff; border: 1px solid #bdbdbd; }
.lib .thumb { height: 139px; }
.vscroll .down { margin-top: auto; }
.ltabs { flex: 1; display: flex; font-size: 13px; }
.ltabs a { padding: 6px 11px; }
.ltabs a.on { width: 63px; padding: 7px 0 0 10px; border: 1px solid #c9c9c9; border-top: 0; }

.center { width: 664px; display: flex; flex-direction: column; }
.docbar { flex: none; height: 26px; padding-top: 2px; }
.doc { height: 24px; width: 120px; background: #c4c4c4; display: flex; align-items: center; padding-left: 9px; font: 600 12.500px Inter, sans-serif; color: #000; }
.doc b { margin: 0 10px 0 5px; font-weight: 600; }
.sheet { flex: none; height: 641px; display: grid; grid-template: 18px 609px 14px / 18px 632px 14px; }
.corner { background: #ededed; border: 1px solid #d5d5d5; }
.hruler, .vruler, .canvas { overflow: hidden; }
.vscroll.main { grid-area: 1 / 3 / 3 / 4; padding-top: 1px; }
.main .thumb { margin-top: 161px; height: 261px; }
.hscroll { grid-area: 3 / 1 / 4 / 3; display: flex; background: #ededed; }
.hscroll .thumb { margin-left: 222px; width: 158px; }
.hscroll .rgt { margin-left: auto; }
.dead { background: #ededed; }
.canvas { grid-area: 2 / 2; }
.vruler { grid-area: 2 / 1; }
.tick { stroke: #d5d5d5; fill: none; }
.rl { font: 400 9.500px "Liberation Sans", sans-serif; fill: #777; }
.link path { fill: none; stroke: #3d6d99; }
.node rect { fill: #4a7dab; stroke: #b0bed5; stroke-width: 3; }
.hub { fill: #1b3c74; stroke: #132f5e; stroke-width: 3; }
.ntext { font: 700 10.500px Lato, sans-serif; fill: #fff; }
.htext { font: 700 13px Lato, sans-serif; fill: #fff; }
.stext { font: 700 10px Lato, sans-serif; fill: #336592; }
.dollar { font: 700 25px "Liberation Sans", sans-serif; fill: url(#gold); text-anchor: middle; }
.pages { flex: none; height: 21px; display: grid; grid-template-columns: 20px 7px 104px 12px 8px 21px 14px 60px; align-items: center; padding: 2px 0 0 6px; font: 600 12.500px Inter, sans-serif; color: #000; }
.pages b { font-weight: 600; }
.pages .cur { color: #ffa545; font-weight: 800; }
.bar { width: 1px; height: 11px; background: #888; }
.bar.soft { background: #bbb; }
.fillbar { display: flex; padding-left: 1px; height: 15px; align-items: center; font-weight: 700; color: #000; }
.fillbar span { margin-top: -1px; }
.palette { display: flex; gap: 1px; margin-left: 2px; }
.palette i { width: 6px; height: 13px; }

.right { width: 346px; padding-left: 4px; display: flex; flex-direction: column; }
.right .phead { padding: 3px 8px 0 5px; }
.right .phead h2 { font-weight: 700; }
.rbody { flex: 1; display: flex; }
.rail { width: 32px; border-right: 1px solid #d5d5d5; display: flex; flex-direction: column; gap: 10px; }
.rail span { width: 30px; height: 30px; display: grid; place-items: center; flex: none; }
.rail .on { background: #c4c4c4; }
.opts { width: 283px; height: 194px; margin: 6px 0 0 6px; border: 1px solid #ececec; padding: 4px 9px; color: #bdbdbd; font-size: 13px; -webkit-text-stroke: .2px; }
.opts label { height: 30px; display: flex; align-items: center; white-space: nowrap; }
.opts i { width: 11px; height: 11px; border: 1px solid #ececec; border-radius: 50%; margin: 2px 5px 0 0; display: grid; place-items: center; }
.opts .sel i::after { content: ""; width: 5px; height: 5px; border-radius: 50%; background: #b5b5b5; }

.status { flex: none; height: 34px; background: #4c4c4c; border-bottom: 1px solid #666; display: flex; align-items: center; color: #fff; font-size: 12.500px; }
.status a { margin-left: 11px; text-decoration: underline; text-underline-offset: 2px; width: 200px; font: 500 13px/20px "Noto Sans", sans-serif; letter-spacing: -.27px; white-space: nowrap; }
.view { margin-left: auto; width: 345px; height: 34px; display: grid; grid-template-columns: 22px 18px 21px 17px 95px 21px 42px 12px 20px 18px 19px 28px 12px; align-items: center; }
.vb { width: 19px; height: 18px; background: #c4c4c4; display: grid; place-items: center; }
.slider { width: 89px; height: 2px; background: #c4c4c4; display: flex; align-items: center; padding-left: 20px; }
.slider i { width: 7px; height: 14px; background: #fff; flex: none; }
.pct { font: 500 13px Inter, sans-serif; }
.grip { align-self: end; margin-bottom: 1px; }
```

FILE: app.js
```js
const NS = 'http://www.w3.org/2000/svg';
const PITCH = 37.8;

function add(svg, tag, attrs, text) {
  const el = document.createElementNS(NS, tag);
  for (const k in attrs) el.setAttribute(k, attrs[k]);
  if (text) el.textContent = text;
  svg.appendChild(el);
}

const h = document.querySelector('.hruler');
let d = 'M0 .5H632M0 17.500H632';
for (let v = 40; v <= 200; v += 10) {
  const x = Math.floor(17.4 + (v - 40) / 10 * PITCH) + 0.5;
  d += `M${x} 1V17M${x + 19} 10V17`;
  add(h, 'text', { x: x + 1.5, y: 8.500, class: 'rl' }, String(v));
}
add(h, 'path', { d, class: 'tick' });

const vr = document.querySelector('.vruler');
d = 'M.5 0V609M17.500 0V609M10 .5H17';
for (let v = -20; v <= 130; v += 10) {
  const y = Math.floor(94.3 + v / 10 * PITCH) + 0.5;
  d += `M1 ${y}H17M10 ${y + 19}H17`;
  add(vr, 'text', { transform: `translate(8 ${y + 2}) rotate(-90)`, 'text-anchor': 'end', class: 'rl' }, String(v));
}
add(vr, 'path', { d, class: 'tick' });

const colors = ('b50a1e d90f23 c94b7b e95463 ed6d72 e85a97 dd92b5 ea8f8b f2909b ff9f7b f0a58a f6bfbc ead3e6 fcd3e3 fddde6 ' +
  '11244f 233a72 482f7c 0c4889 0068a8 4462ad 5484c4 007bc7 008fd5 2ca6e0 00b4ec 32c3f5 8ac3ea 9dd6ef cfeaf6 ' +
  '004b30 005a30 006258 556b2f 007b45 1e9840 00a994 54bfc1 1cc9b1 46b97c 00ab52 7ebb12 9dcf61 c0da3c cfe6cc ' +
  'df4f24 eb6500 f08300 f29854 f0a000 ffae00 fab432 f9c534 ffd700 ffee00 fbf080 fcd575 e8cb97 fedcaf fde8d0 ' +
  '7a3177 8a3e87 664097 745399 9c66a4 9b588c cc7db1 a895cb c9a5ca ecc0dd ' +
  '5a2819 753c34 954f29 a8552a bf793e b4866c deb887 d3cbc6 c9d3cc ' +
  '000000 3f3a3a 565656 727272 888888 9f9f9f b5b5b6 cacaca dbdbdb ededed').split(' ');
const palette = document.querySelector('.palette');
for (const c of colors) {
  const s = document.createElement('i');
  s.style.background = '#' + c;
  palette.appendChild(s);
}
```
